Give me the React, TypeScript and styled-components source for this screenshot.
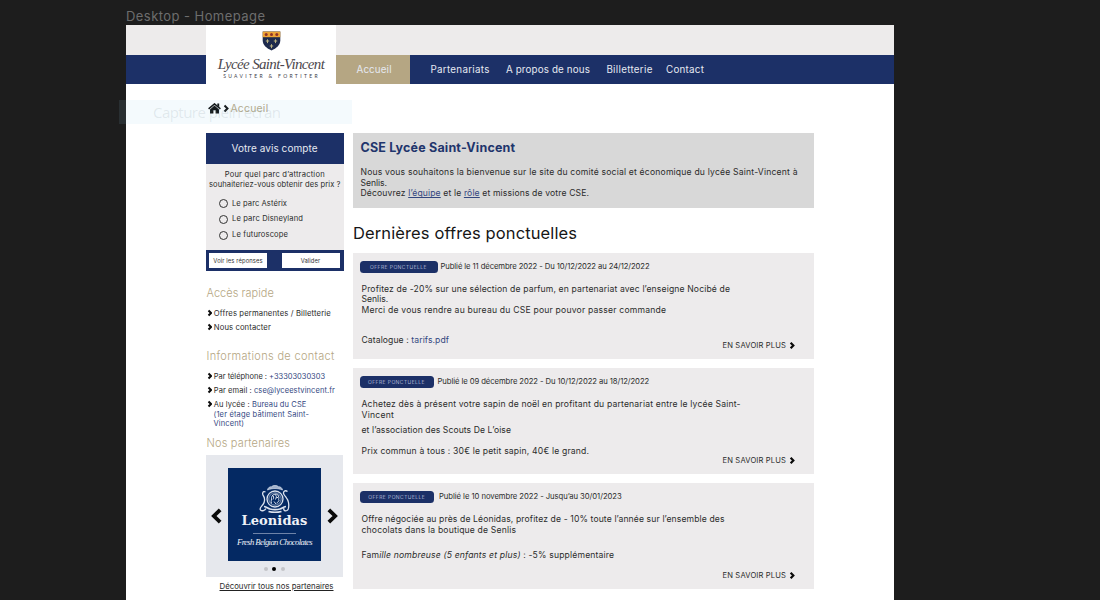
import React from "react";
import styled, { createGlobalStyle } from "styled-components";

const NAVY = "#1c3067";
const TAN = "#b5a683";
const LINK = "#33477f";

const GlobalStyle = createGlobalStyle`
  * { box-sizing: border-box; }
  body {
    margin: 0;
    background: #1d1d1d;
    font-family: Inter, "Liberation Sans", sans-serif;
    color: #222;
  }
`;

/* Single line of text: size, tracking, line height and space above it */
const Text = styled.div<{ $s: number; $ls?: number; $lh?: number; $mt?: number; $c?: string }>`
  font-size: ${(p) => p.$s}px;
  letter-spacing: ${(p) => p.$ls ?? 0}px;
  line-height: ${(p) => p.$lh ?? 10.6}px;
  margin-top: ${(p) => p.$mt ?? 0}px;
  color: ${(p) => p.$c ?? "#2b2b2b"};
  white-space: nowrap;
`;

const Link = styled.a<{ $underline?: boolean }>`
  color: ${LINK};
  text-decoration: ${(p) => (p.$underline ? "underline" : "none")};
`;

const Canvas = styled.div`
  position: relative;
  width: 1100px;
  height: 600px;
  overflow: hidden;
  padding-left: 126px;
  background: #1d1d1d;
`;

const FrameLabel = styled.div`
  height: 25.4px;
  padding-top: 8px;
  font-size: 13px;
  line-height: 16px;
  letter-spacing: 0.44px;
  color: #6d6d6d;
`;

const Page = styled.div`
  width: 768px;
  height: 575px;
  background: #fff;
`;

const Header = styled.header`
  display: grid;
  grid-template-columns: 80px 130px 1fr;
  grid-template-rows: 29.6px 29.5px;
  background: linear-gradient(#edebeb 30px, ${NAVY} 30px);
`;

const Brand = styled.div`
  grid-column: 2;
  grid-row: 1 / 3;
  display: flex;
  flex-direction: column;
  align-items: center;
  padding-top: 6px;
  background: #fff;
`;

const BrandName = styled.div`
  margin-top: 3.3px;
  font: italic 15px/18px "Liberation Serif", serif;
  letter-spacing: -0.65px;
  color: #4c474d;
  white-space: nowrap;
`;

const Motto = styled.div`
  margin-top: 0.2px;
  padding-left: 1px;
  font: 5px/7px Lato, sans-serif;
  letter-spacing: 2.33px;
  color: #3c3c48;
  white-space: nowrap;
`;

const Nav = styled.nav`
  grid-column: 3;
  grid-row: 2;
  display: flex;
  align-items: center;
`;

const NavItem = styled.a<{ $w: number; $ls: number; $active?: boolean }>`
  flex: 0 0 ${(p) => p.$w}px;
  height: 29.5px;
  padding-left: ${(p) => (p.$active ? 20.5 : 0)}px;
  margin-right: ${(p) => (p.$active ? 20 : 0)}px;
  font-size: 9.8px;
  line-height: 30px;
  letter-spacing: ${(p) => p.$ls}px;
  color: #e6e9f1;
  background: ${(p) => (p.$active ? TAN : "transparent")};
  white-space: nowrap;
`;

const Breadcrumb = styled.div`
  display: flex;
  align-items: center;
  height: 48.1px;
  padding: 0 0 0 82px;
  gap: 1.7px;
`;

const Columns = styled.div`
  display: grid;
  grid-template-columns: 137.5px 461.5px;
  column-gap: 9px;
  padding-left: 80px;
`;

const Sidebar = styled.aside``;
const Main = styled.main``;

const PollHead = styled.div`
  height: 31px;
  padding-left: 25.5px;
  background: ${NAVY};
`;

const PollBody = styled.div`
  height: 86.5px;
  padding-top: 6.9px;
  background: #edebec;
`;

const Question = styled.div`
  display: flex;
  flex-direction: column;
  align-items: center;
  margin-bottom: 6.6px;
`;

const Option = styled.label`
  display: flex;
  align-items: center;
  height: 15.6px;
  padding-left: 13px;
  gap: 4px;
`;

const Radio = styled.span`
  width: 9px;
  height: 9px;
  border: 1px solid #333;
  border-radius: 50%;
`;

const PollFoot = styled.div`
  display: flex;
  justify-content: space-between;
  height: 21px;
  padding: 3px 4px 3px 3px;
  background: ${NAVY};
`;

const PollButton = styled.button`
  width: 58px;
  height: 15px;
  padding: 0;
  border: 0;
  background: #fff;
  font: 5.8px/15px Inter, sans-serif;
  letter-spacing: 0.12px;
  color: #333;
`;

const SideTitle = styled.h3<{ $ls: number; $mt: number }>`
  margin: ${(p) => p.$mt}px 0 0 0.5px;
  font-size: 11px;
  font-weight: 300;
  line-height: 14px;
  letter-spacing: ${(p) => p.$ls}px;
  color: ${TAN};
`;

const Item = styled.div<{ $mt?: number }>`
  display: flex;
  align-items: flex-start;
  gap: 1.5px;
  height: 14px;
  margin-top: ${(p) => p.$mt ?? 0}px;
  padding: 2.2px 0 0 0.8px;
  svg { flex: none; margin-top: 0.3px; }
`;

const Address = styled.div`
  padding-left: 7.5px;
`;

const Carousel = styled.div`
  display: grid;
  grid-template-columns: 22px 93px 22px;
  grid-template-rows: 93px 1fr;
  width: 137px;
  height: 122px;
  margin-top: 5.6px;
  padding-top: 13px;
  align-items: center;
  justify-items: center;
  background: #e6e8ed;
  > svg { margin-top: 3px; }
`;

const Partner = styled.div`
  display: flex;
  flex-direction: column;
  align-items: center;
  align-self: stretch;
  width: 93px;
  padding-top: 15.5px;
  background: #042963;
  color: #eef1f7;
`;

const PartnerName = styled.div`
  margin-top: -1.5px;
  font: bold 13px/16px "DejaVu Serif", serif;
  letter-spacing: 0.1px;
`;

const PartnerRule = styled.div`
  width: 43px;
  height: 1px;
  margin-top: 4px;
  background: #6e83a8;
`;

const PartnerTag = styled.div`
  margin-top: 2px;
  font: italic 8.6px/12px "Liberation Serif", serif;
  letter-spacing: -0.6px;
  white-space: nowrap;
`;

const Dots = styled.div`
  grid-column: 2;
  display: flex;
  gap: 4.5px;
  margin-right: 1px;
`;

const Dot = styled.span<{ $on?: boolean }>`
  width: 4px;
  height: 4px;
  border-radius: 50%;
  background: ${(p) => (p.$on ? "#000" : "#c4c4c8")};
`;

const AllPartners = styled.div`
  padding-left: 13.5px;
  text-decoration: underline;
  text-underline-offset: 1px;
`;

const Intro = styled.section`
  height: 75.8px;
  padding: 7.2px 0 0 8px;
  background: #d8d8d8;
`;

const IntroTitle = styled.h1`
  margin: 0 0 11.4px;
  font-size: 12.5px;
  line-height: 16px;
  letter-spacing: 0.18px;
  color: #1f356c;
`;

const SectionTitle = styled.h2`
  margin: 14.2px 0 9px 0.5px;
  font-size: 16.5px;
  font-weight: 400;
  line-height: 21px;
  letter-spacing: 0.115px;
  color: #161616;
`;

const Card = styled.article`
  display: flex;
  height: 106px;
  margin-bottom: 9.3px;
  padding: 8px 0 0 9px;
  background: #edebec;
`;

const CardBody = styled.div`
  flex: none;
  width: 361px;
`;

const Meta = styled.div<{ $gap: number }>`
  display: flex;
  align-items: center;
  gap: ${(p) => p.$gap}px;
  height: 12px;
  margin: 0 0 11.3px -2px;
`;

const Badge = styled.span<{ $w: number }>`
  width: ${(p) => p.$w}px;
  height: 12px;
  border-radius: 3.5px;
  background: ${NAVY};
  font-size: 5px;
  font-weight: 300;
  line-height: 12.5px;
  letter-spacing: 0.44px;
  text-align: center;
  color: #d5dcec;
  white-space: nowrap;
`;

const More = styled.a`
  display: flex;
  align-items: center;
  align-self: flex-end;
  gap: 3px;
  height: 12px;
  margin-bottom: 7px;
  svg { margin-top: -1px; }
`;

const Ghost = styled.div`
  position: absolute;
  left: 119px;
  top: 100px;
  width: 233px;
  height: 24px;
  padding-left: 34px;
  background: rgba(150, 205, 235, 0.1);
  font: 15px/25px "Open Sans", sans-serif;
  letter-spacing: -0.53px;
  color: rgba(120, 140, 150, 0.17);
`;

function Chevron({ w, h, sw, left }: { w: number; h: number; sw: number; left?: boolean }) {
  const a = sw * 0.75;
  return (
    <svg width={w} height={h} viewBox={`0 0 ${w} ${h}`}>
      <path
        d={left
          ? `M${w - a} ${a}L${a} ${h / 2}L${w - a} ${h - a}`
          : `M${a} ${a}L${w - a} ${h / 2}L${a} ${h - a}`}
        fill="none" stroke="#0a0a0a" strokeWidth={sw}
      />
    </svg>
  );
}

function Crest() {
  return (
    <svg width="19" height="20" viewBox="0 0 19 20">
      <path d="M.7.6h17.6v8.6c0 5-4 8-8.800 10.200C4.700 17.200.7 14.200.7 9.200z" fill="#1d2a4d" />
      <path d="M.7.6h17.6v5.600H.7z" fill="#eda435" />
      <g fill="#8f3328">
        <circle cx="4.200" cy="3.500" r="1.500" /><circle cx="9.500" cy="3.500" r="1.500" /><circle cx="14.800" cy="3.500" r="1.500" />
      </g>
      <g stroke="#b9b384" strokeWidth="1">
        <path d="M5.500 8.300v3.800M3.800 10h3.400M13.500 8.300v3.800M11.800 10h3.400M9.500 13.200v4M7.800 15h3.400" />
      </g>
    </svg>
  );
}

function Home() {
  return (
    <svg width="13" height="11" viewBox="0 0 13 11">
      <path d="M6.500 2.600 2 6.400V10.500h3.400V7.300h2.200v3.200H11V6.400z" fill="#050505" />
      <path d="M.6 5.900 6.500.9l5.900 5" fill="none" stroke="#050505" strokeWidth="1.500" />
      <path d="M9.300.6h1.900v3.600L9.300 2.600z" fill="#050505" />
    </svg>
  );
}

function LeonidasEmblem() {
  return (
    <svg width="34" height="31" viewBox="0 0 34 31" fill="none" stroke="#dbe2ee">
      <circle cx="17" cy="15" r="8" strokeWidth="1.300" />
      <circle cx="17" cy="15" r="6.200" strokeWidth=".6" />
      <path d="M9.500 6c.5-2.500 2.500-3.500 4-3.200 1-1.700 6-1.700 7 0 1.500-.3 3.500.7 4 3.200-4.500-2-10.500-2-15 0z" fill="#9fb0cc" strokeWidth=".7" />
      <path d="M13.500 19.500c-1-3 .5-4 0-6 1-4 6-4.500 7-1.500 1 2-.5 3 .5 4.500 0 1.500-2 1-2 3M14 11c2 1 2 3 1 4.500M17 10.500c2 1 1.500 3 .5 5M16 17.500l2 2.500M18.500 13.500h1.500" strokeWidth="1" />
      <path d="M7.500 8C4.500 6.500 4 10 5.500 12S7 18 5 20.500s-4 4-2.500 5.500 4.500.5 5.500-1.500M29.500 7.500c-2.500-2-5 .5-3.500 3s4 4.500 4.500 8 .5 7-1.500 8-4-.5-3-2.500" strokeWidth="1.300" />
      <path d="M6 22.500c3 .5 4 2 6 2.500 3 .7 7 .7 10 0 2-.5 3-2 6-2.500M10.500 27.500c4 1 9 1 13 0" strokeWidth="1.600" />
    </svg>
  );
}

const Small = () => <Chevron w={5.5} h={8} sw={2} />;

type Line = { t: React.ReactNode; ls: number; mt?: number };
type Offer = { badge: number; gap: number; date: string; dateLs: number; lines: Line[] };

const offers: Offer[] = [
  {
    badge: 78, gap: 3, date: "Publié le 11 décembre 2022 - Du 10/12/2022 au 24/12/2022", dateLs: -0.1,
    lines: [
      { t: "Profitez de -20% sur une sélection de parfum, en partenariat avec l’enseigne Nocibé de", ls: 0.144 },
      { t: "Senlis.", ls: 0 },
      { t: "Merci de vous rendre au bureau du CSE pour pouvor passer commande", ls: 0.206 },
      { t: <>Catalogue : <Link>tarifs.pdf</Link></>, ls: 0.094, mt: 19.2 },
    ],
  },
  {
    badge: 74, gap: 4, date: "Publié le 09 décembre 2022 - Du 10/12/2022 au 18/12/2022", dateLs: -0.085,
    lines: [
      { t: "Achetez dès à présent votre sapin de noël en profitant du partenariat entre le lycée Saint-", ls: 0.177 },
      { t: "Vincent", ls: 0.25 },
      { t: "et l’association des Scouts De L’oise", ls: 0.078, mt: 4.3 },
      { t: "Prix commun à tous : 30€ le petit sapin, 40€ le grand.", ls: 0.179, mt: 10.6 },
    ],
  },
  {
    badge: 74.5, gap: 5, date: "Publié le 10 novembre 2022 - Jusqu’au 30/01/2023", dateLs: -0.06,
    lines: [
      { t: "Offre négociée au près de Léonidas, profitez de - 10% toute l’année sur l’ensemble des", ls: 0.122 },
      { t: "chocolats dans la boutique de Senlis", ls: 0.175 },
      { t: <>Fam<i>ille nombreuse (5 enfants et plus)</i> : -5% supplémentaire</>, ls: 0.168, mt: 14.6 },
    ],
  },
];

export default function App() {
  return (
    <Canvas>
      <GlobalStyle />
      <FrameLabel>Desktop - Homepage</FrameLabel>
      <Page>
        <Header>
          <Brand>
            <Crest />
            <BrandName>Lycée Saint-Vincent</BrandName>
            <Motto>SUAVITER &amp; FORTITER</Motto>
          </Brand>
          <Nav>
            <NavItem $active $w={74.4} $ls={0.133}>Accueil</NavItem>
            <NavItem $w={75.5} $ls={0.298}>Partenariats</NavItem>
            <NavItem $w={100.5} $ls={0.146}>A propos de nous</NavItem>
            <NavItem $w={59.7} $ls={0.305}>Billetterie</NavItem>
            <NavItem $w={60} $ls={0.237}>Contact</NavItem>
          </Nav>
        </Header>

        <Breadcrumb>
          <Home />
          <Chevron w={6} h={9} sw={2} />
          <Text $s={10.4} $ls={0.25} $lh={14} $mt={1} $c={TAN}>Accueil</Text>
        </Breadcrumb>

        <Columns>
          <Sidebar>
            <PollHead><Text $s={10} $ls={0.056} $lh={31.5} $c="#e6e9f1">Votre avis compte</Text></PollHead>
            <PollBody>
              <Question>
                <Text $s={7.6} $ls={0.206} $lh={9.5}>Pour quel parc d’attraction</Text>
                <Text $s={7.6} $ls={0.076} $lh={9.5}>souhaiteriez-vous obtenir des prix ?</Text>
              </Question>
              <Option><Radio /><Text $s={7.6} $ls={0.064}>Le parc Astérix</Text></Option>
              <Option><Radio /><Text $s={7.6} $ls={0.135}>Le parc Disneyland</Text></Option>
              <Option><Radio /><Text $s={7.6} $ls={0.123}>Le futuroscope</Text></Option>
            </PollBody>
            <PollFoot>
              <PollButton>Voir les réponses</PollButton>
              <PollButton>Valider</PollButton>
            </PollFoot>

            <SideTitle $ls={0.03} $mt={15}>Accès rapide</SideTitle>
            <Item $mt={6.6}><Small /><Text $s={7.7} $ls={0.118}>Offres permanentes / Billetterie</Text></Item>
            <Item><Small /><Text $s={7.7} $ls={0.093}>Nous contacter</Text></Item>

            <SideTitle $ls={0.32} $mt={14.2}>Informations de contact</SideTitle>
            <Item $mt={6.8}><Small /><Text $s={7.5} $ls={-0.02}>Par téléphone : <Link>+33303030303</Link></Text></Item>
            <Item><Small /><Text $s={7.5} $ls={0.09}>Par email : <Link>cse@lyceestvincent.fr</Link></Text></Item>
            <Item><Small /><Text $s={7.5} $ls={0.099}>Au lycée : <Link>Bureau du CSE</Link></Text></Item>
            <Address>
              <Text $s={7.5} $ls={0.166} $lh={9} $mt={-1.7} $c={LINK}>(1er étage bâtiment Saint-</Text>
              <Text $s={7.5} $ls={0.114} $lh={9} $c={LINK}>Vincent)</Text>
            </Address>

            <SideTitle $ls={0.17} $mt={7.7}>Nos partenaires</SideTitle>
            <Carousel>
              <Chevron w={12} h={18} sw={3.8} left />
              <Partner>
                <LeonidasEmblem />
                <PartnerName>Leonidas</PartnerName>
                <PartnerRule />
                <PartnerTag>Fresh Belgian Chocolates</PartnerTag>
              </Partner>
              <Chevron w={12} h={18} sw={3.8} />
              <Dots><Dot /><Dot $on /><Dot /></Dots>
            </Carousel>
            <AllPartners><Text $s={7.8} $ls={0.011} $mt={3.7}>Découvrir tous nos partenaires</Text></AllPartners>
          </Sidebar>

          <Main>
            <Intro>
              <IntroTitle>CSE Lycée Saint-Vincent</IntroTitle>
              <Text $s={8.6} $ls={0.192}>Nous vous souhaitons la bienvenue sur le site du comité social et économique du lycée Saint-Vincent à</Text>
              <Text $s={8.6} $ls={-0.04}>Senlis.</Text>
              <Text $s={8.6} $ls={0.135}>Découvrez <Link $underline>l’équipe</Link> et le <Link $underline>rôle</Link> et missions de votre CSE.</Text>
            </Intro>
            <SectionTitle>Dernières offres ponctuelles</SectionTitle>
            {offers.map((o) => (
              <Card key={o.date}>
                <CardBody>
                  <Meta $gap={o.gap}>
                    <Badge $w={o.badge}>OFFRE PONCTUELLE</Badge>
                    <Text $s={7.7} $ls={o.dateLs} $lh={12} $mt={0.6}>{o.date}</Text>
                  </Meta>
                  {o.lines.map((l, i) => (
                    <Text key={i} $s={8.6} $ls={l.ls} $mt={l.mt}>{l.t}</Text>
                  ))}
                </CardBody>
                <More>
                  <Text $s={7.6} $ls={0.15} $lh={12}>EN SAVOIR PLUS</Text>
                  <Chevron w={6} h={9} sw={2.2} />
                </More>
              </Card>
            ))}
          </Main>
        </Columns>
      </Page>
      <Ghost>Capture plein écran</Ghost>
    </Canvas>
  );
}
